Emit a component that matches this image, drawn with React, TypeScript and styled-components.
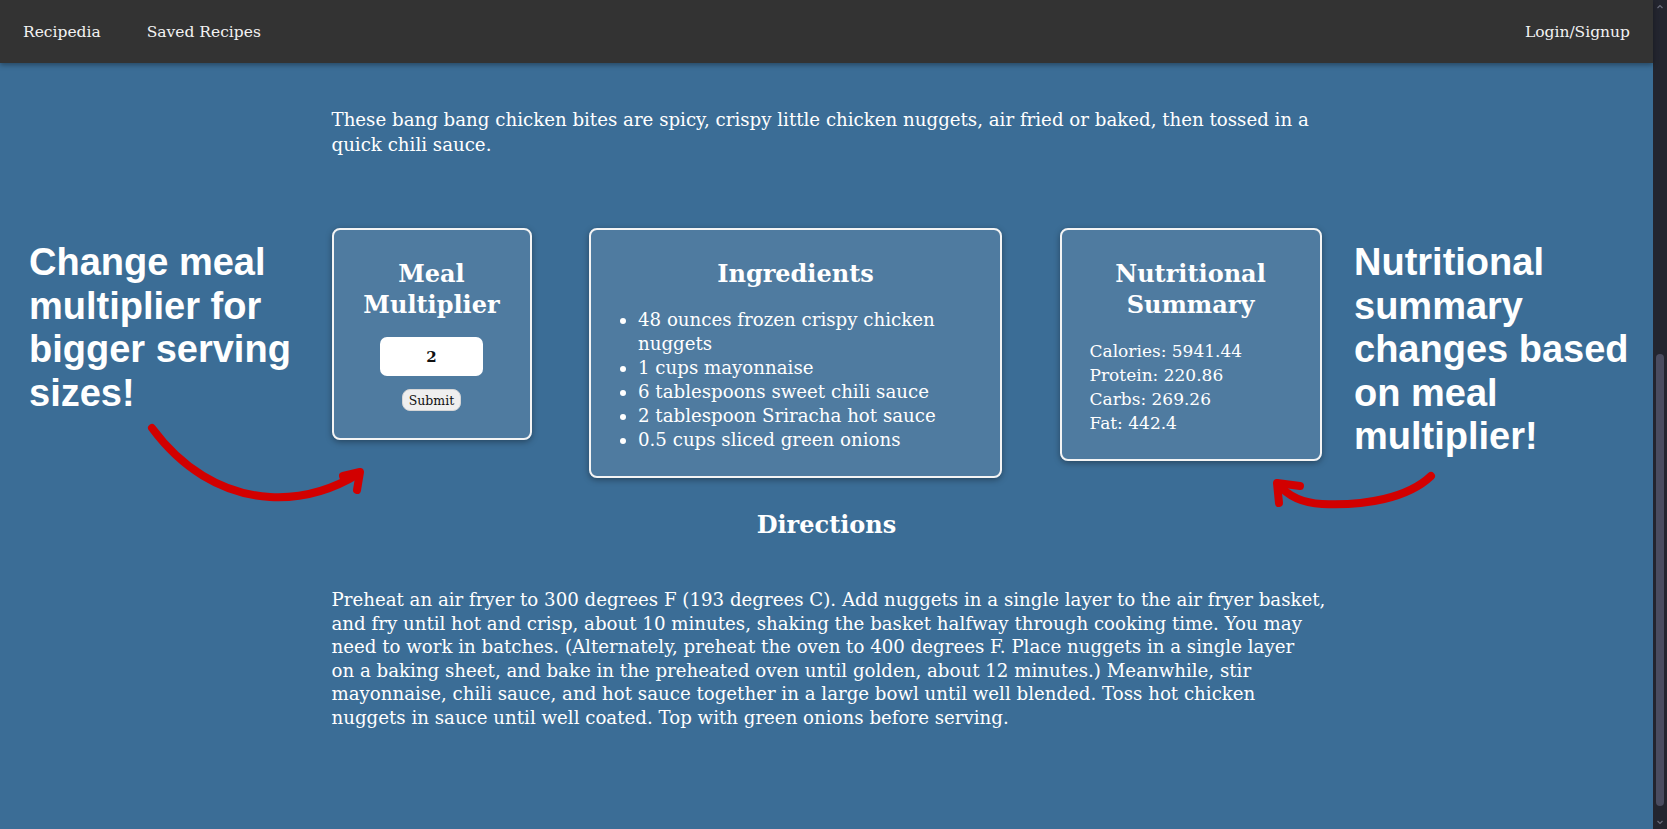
import React, { useState } from 'react';
import styled, { createGlobalStyle } from 'styled-components';

const serif = '"DejaVu Serif", Georgia, serif';

const GlobalStyle = createGlobalStyle`
  html, body {
    overflow: hidden;
    background: #3b6d96;
  }
  body {
    margin: 0;
    font-family: ${serif};
    color: #ffffff;
  }
`;

const Layout = styled.div`
  display: flex;
  height: 100vh;
`;

const Page = styled.div`
  position: relative;
  flex: 1;
  background: #3b6d96;
`;

const ScrollTrack = styled.div`
  width: 14px;
  flex-shrink: 0;
  background: #23252f;
  display: flex;
  flex-direction: column;
  align-items: center;
`;

const ScrollThumb = styled.div`
  width: 8px;
  height: 452px;
  margin-top: 342px;
  border-radius: 4px;
  background: #4a4c60;
`;

const ScrollArrow = styled.svg<{ $bottom?: boolean }>`
  width: 8px;
  height: 12px;
  margin-top: ${(p) => (p.$bottom ? 'auto' : '0')};
  flex-shrink: 0;
`;

const NavBar = styled.nav`
  height: 63px;
  background-color: #333333;
  display: flex;
  align-items: center;
  justify-content: space-between;
  box-shadow: 0 2px 5px rgba(0, 0, 0, 0.35);
`;

const NavGroup = styled.div`
  display: flex;
  align-items: center;
`;

const NavLink = styled.a`
  color: #f2f2f2;
  text-decoration: none;
  font-size: 15.5px;
  padding: 0 23px;
`;

const Main = styled.main`
  width: 990px;
  margin: 0 auto;
  padding-top: 45px;
`;

const Paragraph = styled.p<{ $gap?: number; $lineHeight?: number }>`
  margin: ${(p) => p.$gap ?? 0}px 0 0;
  font-size: 18.2px;
  line-height: ${(p) => p.$lineHeight ?? 23.5}px;
  white-space: nowrap;
`;

const Line = styled.span`
  display: block;
`;

const CardRow = styled.div`
  display: flex;
  justify-content: space-between;
  align-items: flex-start;
  margin-top: 71px;
`;

const Card = styled.section<{ $width: number }>`
  width: ${(p) => p.$width}px;
  box-sizing: border-box;
  background-color: rgba(255, 255, 255, 0.1);
  border: 2px solid #f4f4f4;
  border-radius: 8px;
  box-shadow: 0 2px 6px rgba(0, 0, 0, 0.35);
  padding: 28px 20px 24px;
`;

const CardTitle = styled.h2`
  margin: 0;
  font-size: 24px;
  line-height: 31px;
  font-weight: bold;
  text-align: center;
`;

const MultiplierForm = styled.form`
  display: flex;
  flex-direction: column;
  align-items: center;
  gap: 13px;
  margin: 17px 0 3px;
`;

const MultiplierInput = styled.input`
  width: 103px;
  height: 39px;
  box-sizing: border-box;
  border: none;
  border-radius: 7px;
  background: #ffffff;
  color: #111111;
  text-align: center;
  font-family: ${serif};
  font-size: 15px;
  font-weight: bold;
  outline: none;
`;

const SubmitButton = styled.button`
  height: 22px;
  padding: 0 6px;
  border: 1px solid #d6d6d6;
  border-radius: 8px;
  background: #efefef;
  color: #111111;
  font-family: ${serif};
  font-size: 12.5px;
  cursor: pointer;
`;

const IngredientList = styled.ul`
  margin: 19px 0 0;
  padding-left: 27px;
  font-size: 18.2px;
  line-height: 24px;
`;

const NutritionList = styled.div`
  margin-top: 19px;
  padding-left: 8px;
  font-size: 17px;
  line-height: 24px;
`;

const DirectionsTitle = styled(CardTitle)`
  margin-top: 31px;
`;

const Annotation = styled.div<{ $left: number; $width: number }>`
  position: absolute;
  top: 241px;
  left: ${(p) => p.$left}px;
  width: ${(p) => p.$width}px;
  font-family: "Liberation Sans", Arial, sans-serif;
  font-weight: bold;
  font-size: 38px;
  line-height: 43.5px;
  color: #ffffff;
`;

const ArrowLayer = styled.svg`
  position: absolute;
  top: 0;
  left: 0;
  width: 100%;
  height: 100%;
  pointer-events: none;
  overflow: visible;
`;

const descriptionLines = [
  'These bang bang chicken bites are spicy, crispy little chicken nuggets, air fried or baked, then tossed in a',
  'quick chili sauce.',
];

const directionLines = [
  'Preheat an air fryer to 300 degrees F (193 degrees C). Add nuggets in a single layer to the air fryer basket,',
  'and fry until hot and crisp, about 10 minutes, shaking the basket halfway through cooking time. You may',
  'need to work in batches. (Alternately, preheat the oven to 400 degrees F. Place nuggets in a single layer',
  'on a baking sheet, and bake in the preheated oven until golden, about 12 minutes.) Meanwhile, stir',
  'mayonnaise, chili sauce, and hot sauce together in a large bowl until well blended. Toss hot chicken',
  'nuggets in sauce until well coated. Top with green onions before serving.',
];

const ingredients = [
  '48 ounces frozen crispy chicken nuggets',
  '1 cups mayonnaise',
  '6 tablespoons sweet chili sauce',
  '2 tablespoon Sriracha hot sauce',
  '0.5 cups sliced green onions',
];

const baseNutrition = { calories: 2970.72, protein: 110.43, carbs: 134.63, fat: 221.2 };

const round = (n: number) => Math.round(n * 100) / 100;

const App: React.FC = () => {
  const [input, setInput] = useState('2');
  const [multiplier, setMultiplier] = useState(2);

  const submit = (e: React.FormEvent) => {
    e.preventDefault();
    const n = parseFloat(input);
    if (!isNaN(n) && n > 0) setMultiplier(n);
  };

  return (
    <Layout>
      <GlobalStyle />
      <Page>
        <NavBar>
          <NavGroup>
            <NavLink href="#">Recipedia</NavLink>
            <NavLink href="#">Saved Recipes</NavLink>
          </NavGroup>
          <NavLink href="#">Login/Signup</NavLink>
        </NavBar>

        <Main>
          <Paragraph $lineHeight={24.5}>
            {descriptionLines.map((line) => (
              <Line key={line}>{line}</Line>
            ))}
          </Paragraph>

          <CardRow>
            <Card $width={200}>
              <CardTitle>Meal Multiplier</CardTitle>
              <MultiplierForm onSubmit={submit}>
                <MultiplierInput value={input} onChange={(e) => setInput(e.target.value)} />
                <SubmitButton type="submit">Submit</SubmitButton>
              </MultiplierForm>
            </Card>

            <Card $width={413}>
              <CardTitle>Ingredients</CardTitle>
              <IngredientList>
                {ingredients.map((item) => (
                  <li key={item}>{item}</li>
                ))}
              </IngredientList>
            </Card>

            <Card $width={262}>
              <CardTitle>Nutritional Summary</CardTitle>
              <NutritionList>
                <div>Calories: {round(baseNutrition.calories * multiplier)}</div>
                <div>Protein: {round(baseNutrition.protein * multiplier)}</div>
                <div>Carbs: {round(baseNutrition.carbs * multiplier)}</div>
                <div>Fat: {round(baseNutrition.fat * multiplier)}</div>
              </NutritionList>
            </Card>
          </CardRow>

          <DirectionsTitle>Directions</DirectionsTitle>
          <Paragraph $gap={48}>
            {directionLines.map((line) => (
              <Line key={line}>{line}</Line>
            ))}
          </Paragraph>
        </Main>

        <Annotation $left={29} $width={280}>
          Change meal multiplier for bigger serving sizes!
        </Annotation>
        <Annotation $left={1354} $width={290}>
          Nutritional summary changes based on meal multiplier!
        </Annotation>

        <ArrowLayer>
          <g fill="none" stroke="#d20000" strokeWidth={8} strokeLinecap="round" strokeLinejoin="round">
            <path d="M152,428 C180,466 220,494 270,497 C305,499 335,488 358,474" />
            <path d="M343,476 L360,472 L357,490" />
            <path d="M1431,476 C1408,498 1365,506 1322,504 C1302,503 1287,495 1278,484" />
            <path d="M1300,486 L1277,483 L1279,503" />
          </g>
        </ArrowLayer>
      </Page>

      <ScrollTrack>
        <ScrollArrow viewBox="0 0 8 12">
          <path d="M1.5 8 L4 5.5 L6.5 8" fill="none" stroke="#6b6d7c" strokeWidth={1.2} />
        </ScrollArrow>
        <ScrollThumb />
        <ScrollArrow viewBox="0 0 8 12" $bottom>
          <path d="M1.5 4 L4 6.5 L6.5 4" fill="none" stroke="#6b6d7c" strokeWidth={1.2} />
        </ScrollArrow>
      </ScrollTrack>
    </Layout>
  );
};

export default App;
